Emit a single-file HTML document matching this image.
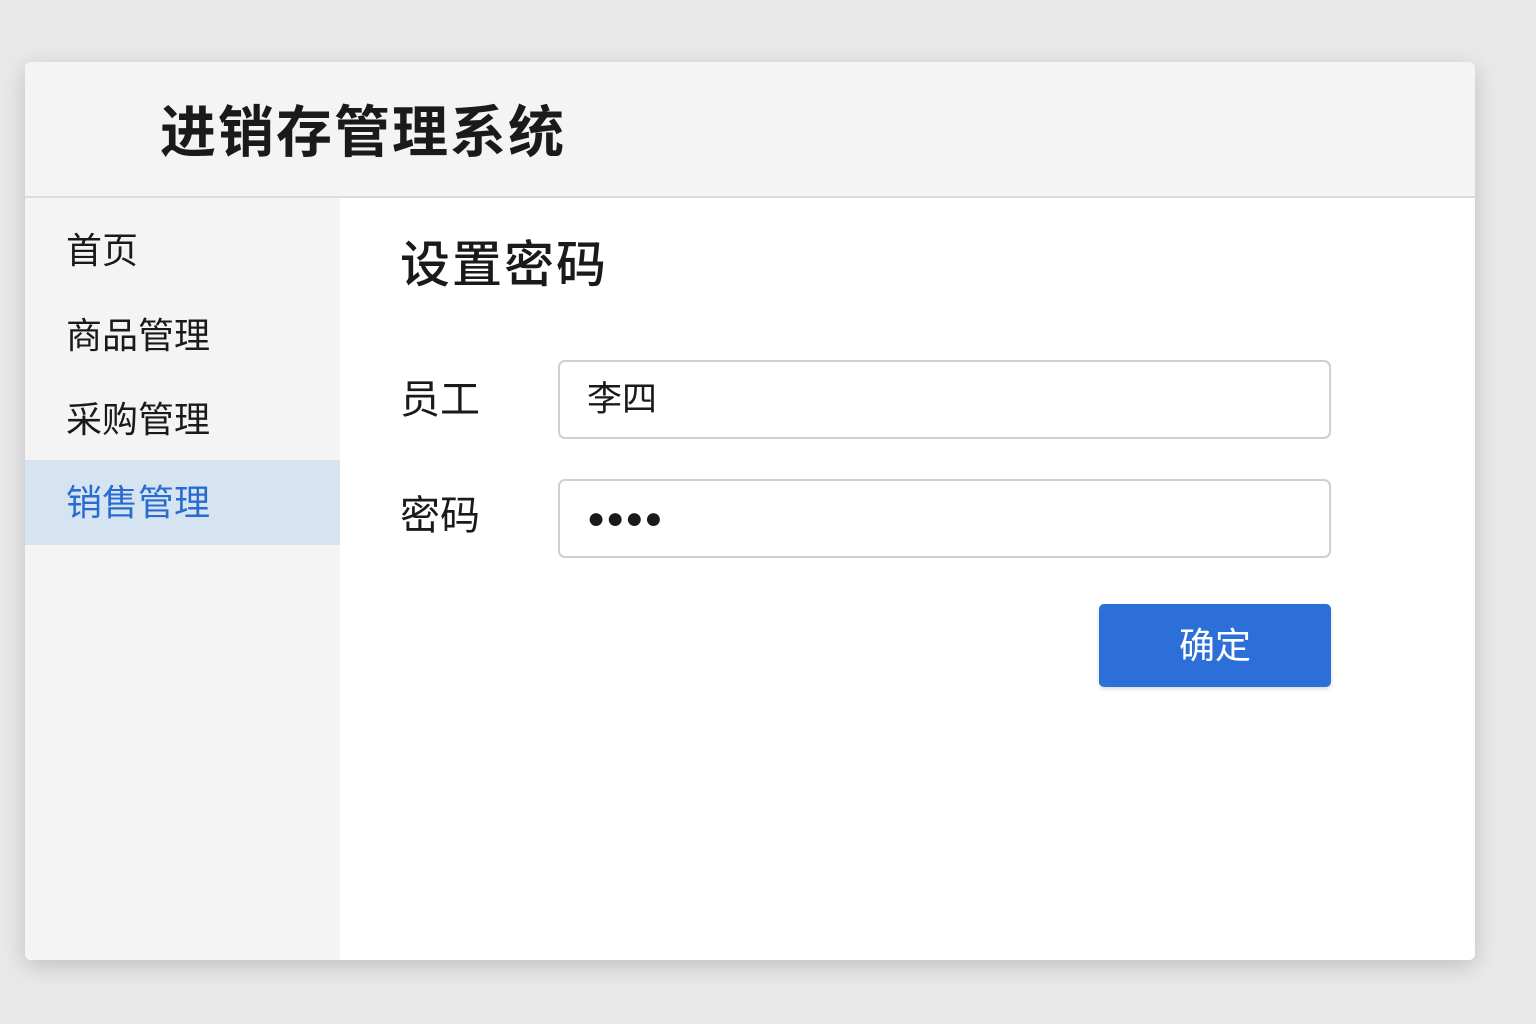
<!DOCTYPE html>
<html><head><meta charset="utf-8"><style>
*{margin:0;padding:0;box-sizing:border-box}
body{width:1536px;height:1024px;background:#e9e9e9;font-family:"Liberation Sans","Noto Sans CJK SC",sans-serif;color:#1a1a1a;position:relative;overflow:hidden}
.card{position:absolute;left:25px;top:62px;width:1450px;height:898px;background:#fff;border-radius:6px;box-shadow:0 6px 24px rgba(0,0,0,.18);overflow:hidden}
.head{position:absolute;left:0;top:0;width:1450px;height:136px;background:#f4f4f4;border-bottom:2px solid #dcdcdc}
.head h1{position:absolute;left:135px;top:36px;font-size:56px;font-weight:700;line-height:70px;letter-spacing:2px}
.side{position:absolute;left:0;top:136px;width:315px;height:762px;background:#f4f4f4}
.item{position:absolute;left:0;width:315px;height:85px;line-height:85px;padding-left:41px;font-size:36px}
.item.active{background:#d6e4f2;color:#2a6bd0}
.main h2{position:absolute;left:375px;top:170px;font-size:50px;font-weight:500;line-height:66px;letter-spacing:2px}
.lab{position:absolute;left:375px;font-size:40px;line-height:60px}
.inp{position:absolute;left:533px;width:773px;height:79px;border:2px solid #cfcfcf;border-radius:7px;padding-left:27px;font-size:35px;line-height:75px}
.btn{position:absolute;left:1074px;top:542px;width:232px;height:83px;background:#2c6fd8;border-radius:5px;color:#fff;font-size:36px;text-align:center;line-height:83px;box-shadow:0 2px 4px rgba(0,0,0,.15)}
</style></head><body>
<div class="card">
<div class="head"><h1>进销存管理系统</h1></div>
<div class="side">
<div class="item" style="top:10px">首页</div>
<div class="item" style="top:95px">商品管理</div>
<div class="item" style="top:179px">采购管理</div>
<div class="item active" style="top:262px">销售管理</div>
</div>
<div class="main">
<h2>设置密码</h2>
<div class="lab" style="top:308px">员工</div>
<div class="inp" style="top:298px">李四</div>
<div class="lab" style="top:424px">密码</div>
<div class="inp" style="top:417px;font-size:30px;letter-spacing:1px">●●●●</div>
<div class="btn">确定</div>
</div>
</div>
</body></html>
